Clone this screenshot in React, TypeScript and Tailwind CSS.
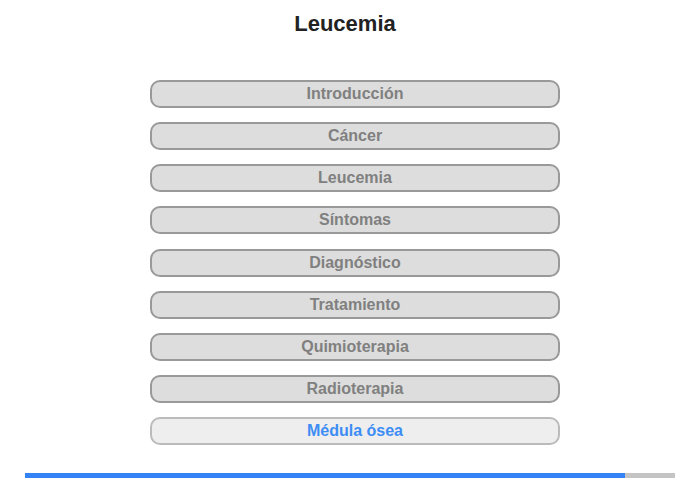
const SECTIONS = [
  "Introducción",
  "Cáncer",
  "Leucemia",
  "Síntomas",
  "Diagnóstico",
  "Tratamiento",
  "Quimioterapia",
  "Radioterapia",
  "Médula ósea",
];

const ACTIVE = 8;

export default function App() {
  return (
    <div className="w-[700px] h-[480px] bg-white flex flex-col font-['Liberation_Sans',Arial,sans-serif]">
      <div className="mt-[11px] h-[26px] w-[690px] flex justify-center">
        <h1 className="leading-[26px] text-[22px] font-bold text-[#222]">Leucemia</h1>
      </div>

      <div className="mt-[43px] ml-[150px] flex flex-col gap-[14.125px] w-[410px]">
        {SECTIONS.map((s, i) => (
          <button
            key={s}
            className={
              i === ACTIVE
                ? "h-[28px] rounded-[10px] border-2 border-[#bbbbbb] bg-[#eeeeee] text-[16px] leading-[24px] font-bold text-[#3d8df5]"
                : "h-[28px] rounded-[10px] border-2 border-[#999999] bg-[#dddddd] text-[16px] leading-[24px] font-bold text-[#808080]"
            }
          >
            {s}
          </button>
        ))}
      </div>

      <div className="mt-[28px] ml-[25px] w-[650px] h-[5px] bg-[#c4c4c4] flex">
        <div className="h-full bg-[#3383f6]" style={{ width: `${(600 / 650) * 100}%` }} />
      </div>
    </div>
  );
}
